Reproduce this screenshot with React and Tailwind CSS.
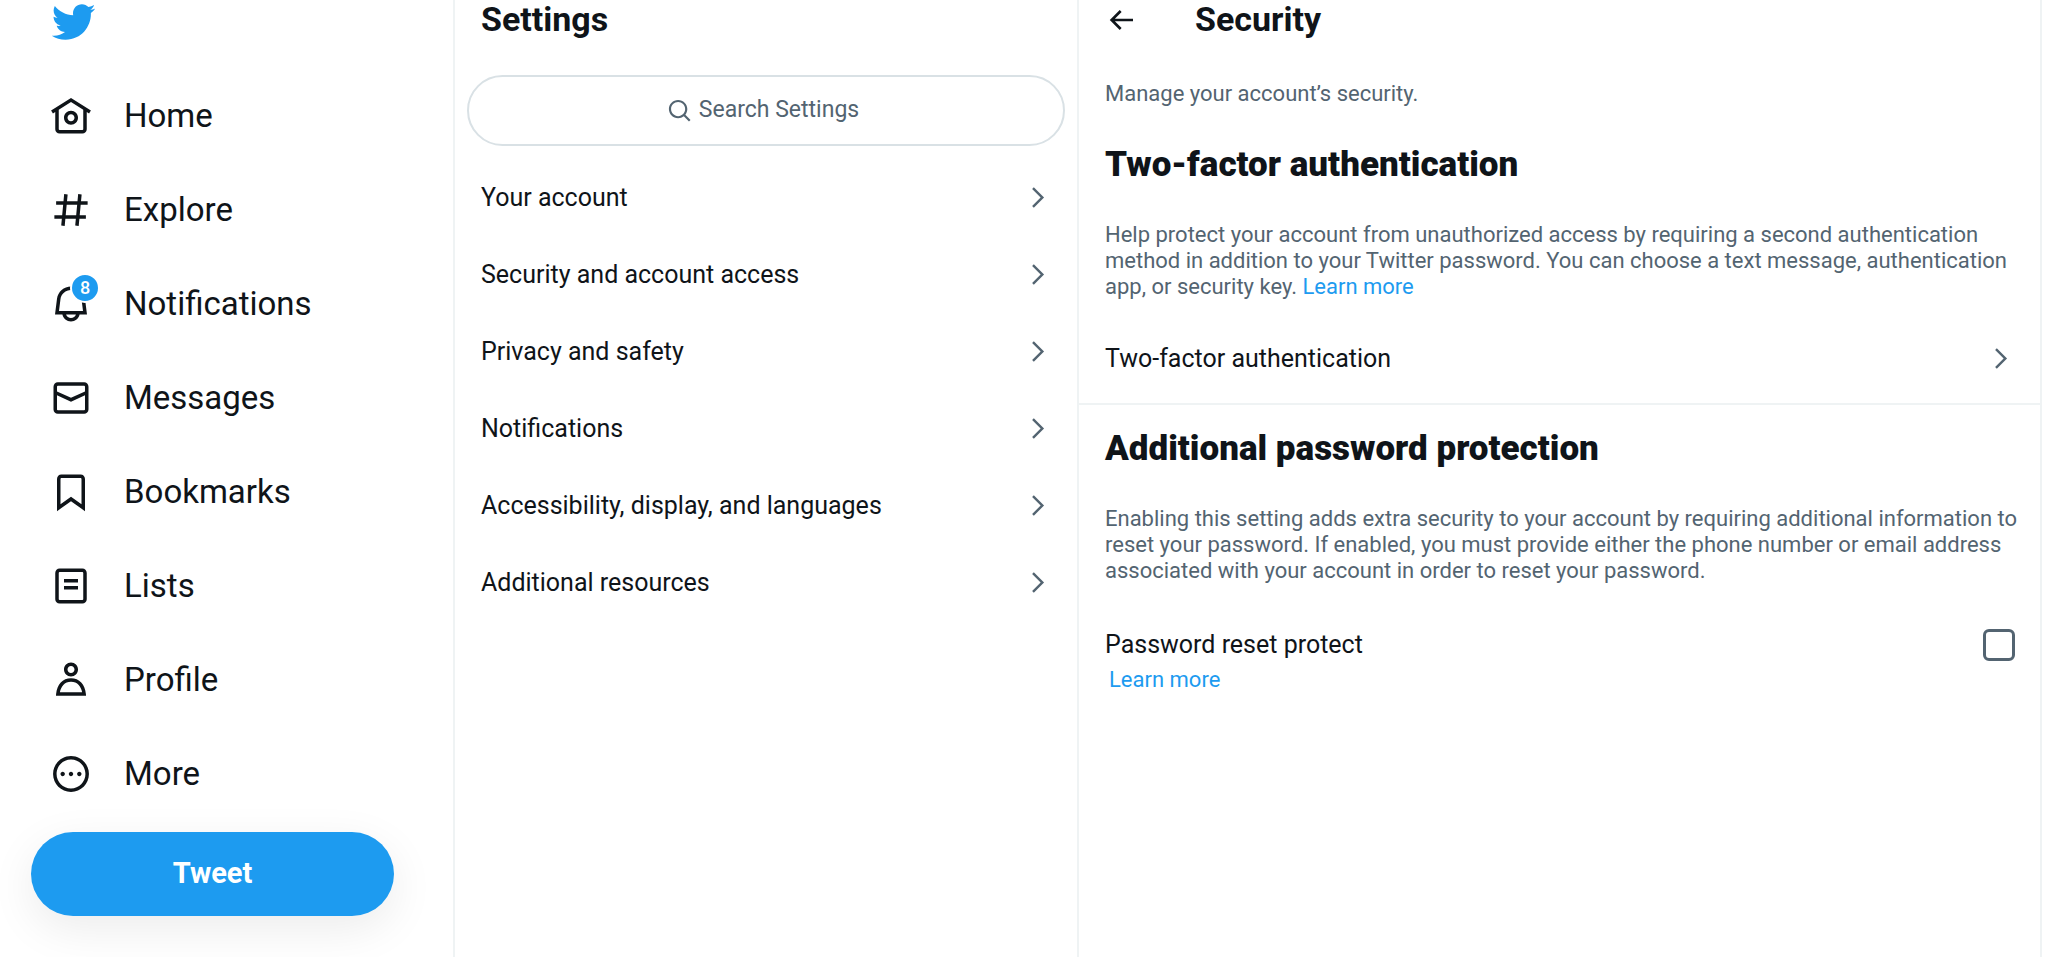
import React, { useState } from 'react';

const navItems = [
  {
    label: 'Home',
    path: 'M12 9c-2.209 0-4 1.791-4 4s1.791 4 4 4 4-1.791 4-4-1.791-4-4-4zm0 6c-1.105 0-2-.895-2-2s.895-2 2-2 2 .895 2 2-.895 2-2 2zm0-13.304L.622 8.807l1.06 1.696L3 9.679V19.5C3 20.881 4.119 22 5.5 22h13c1.381 0 2.5-1.119 2.5-2.5V9.679l1.318.824 1.06-1.696L12 1.696zM19 19.5c0 .276-.224.5-.5.5h-13c-.276 0-.5-.224-.5-.5V8.429l7-4.375 7 4.375V19.5z',
  },
  {
    label: 'Explore',
    path: 'M10.09 3.098L9.72 7h5.99l.39-4.089 1.99.187L17.72 7h3.78v2h-3.97l-.56 6h3.53v2h-3.72l-.38 4.09-1.99-.187.36-3.903H8.78l-.38 4.09-1.99-.187L6.77 17H2.5v-2h4.46l.56-6H3.5V7h4.21l.39-4.089 1.99.187zM14.96 15l.56-6H9.53l-.56 6h5.99z',
  },
  {
    label: 'Notifications',
    badge: 8,
    path: 'M19.993 9.042C19.48 5.017 16.054 2 11.996 2s-7.49 3.021-7.999 7.051L2.866 18H7.1c.463 2.282 2.481 4 4.9 4s4.437-1.718 4.9-4h4.236l-1.143-8.958zM12 20c-1.306 0-2.417-.835-2.829-2h5.658c-.412 1.165-1.523 2-2.829 2zm-6.866-4l.847-6.698C6.364 6.272 8.941 4 11.996 4s5.627 2.268 6.013 5.295L18.864 16H5.134z',
  },
  {
    label: 'Messages',
    path: 'M1.998 5.5c0-1.381 1.119-2.5 2.5-2.5h15c1.381 0 2.5 1.119 2.5 2.5v13c0 1.381-1.119 2.5-2.5 2.5h-15c-1.381 0-2.5-1.119-2.5-2.5v-13zm2.5-.5c-.276 0-.5.224-.5.5v2.764l8 3.638 8-3.636V5.5c0-.276-.224-.5-.5-.5h-15zm15.5 5.463l-8 3.636-8-3.638V18.5c0 .276.224.5.5.5h15c.276 0 .5-.224.5-.5v-8.037z',
  },
  {
    label: 'Bookmarks',
    path: 'M4 4.5C4 3.12 5.119 2 6.5 2h11C18.881 2 20 3.12 20 4.5v18.44l-8-5.71-8 5.71V4.5zM6.5 4c-.276 0-.5.22-.5.5v14.56l6-4.29 6 4.29V4.5c0-.28-.224-.5-.5-.5h-11z',
  },
  {
    label: 'Lists',
    path: 'M3 4.5C3 3.12 4.12 2 5.5 2h13C19.88 2 21 3.12 21 4.5v15c0 1.38-1.12 2.5-2.5 2.5h-13C4.12 22 3 20.88 3 19.5v-15zM5.5 4c-.28 0-.5.22-.5.5v15c0 .28.22.5.5.5h13c.28 0 .5-.22.5-.5v-15c0-.28-.22-.5-.5-.5h-13zM16 10H8V8h8v2zm-8 2h8v2H8v-2z',
  },
  {
    label: 'Profile',
    path: 'M5.651 19h12.698c-.337-1.8-1.023-3.21-1.945-4.19C15.318 13.65 13.838 13 12 13s-3.317.65-4.404 1.81c-.922.98-1.608 2.39-1.945 4.19zm.486-5.56C7.627 11.85 9.648 11 12 11s4.373.85 5.863 2.44c1.477 1.58 2.366 3.8 2.632 6.46l.11 1.1H3.395l.11-1.1c.266-2.66 1.155-4.88 2.632-6.46zM12 4c-1.105 0-2 .9-2 2s.895 2 2 2 2-.9 2-2-.895-2-2-2zM8 6c0-2.21 1.791-4 4-4s4 1.79 4 4-1.791 4-4 4-4-1.79-4-4z',
  },
  {
    label: 'More',
    path: 'M3.75 12c0-4.56 3.69-8.25 8.25-8.25s8.25 3.69 8.25 8.25-3.69 8.25-8.25 8.25S3.75 16.56 3.75 12zM12 1.75C6.34 1.75 1.75 6.34 1.75 12S6.34 22.25 12 22.25 22.25 17.66 22.25 12 17.66 1.75 12 1.75zm-4.75 11.5c.69 0 1.25-.56 1.25-1.25s-.56-1.25-1.25-1.25S6 11.31 6 12s.56 1.25 1.25 1.25zm9.5 0c.69 0 1.25-.56 1.25-1.25s-.56-1.25-1.25-1.25-1.25.56-1.25 1.25.56 1.25 1.25 1.25zM13.25 12c0 .69-.56 1.25-1.25 1.25s-1.25-.56-1.25-1.25.56-1.25 1.25-1.25 1.25.56 1.25 1.25z',
  },
];

const settingsItems = [
  'Your account',
  'Security and account access',
  'Privacy and safety',
  'Notifications',
  'Accessibility, display, and languages',
  'Additional resources',
];

const BIRD =
  'M23.643 4.937c-.835.37-1.732.62-2.675.733.962-.576 1.7-1.49 2.048-2.578-.9.534-1.897.922-2.958 1.13-.85-.904-2.06-1.47-3.4-1.47-2.572 0-4.658 2.086-4.658 4.66 0 .364.042.718.12 1.06-3.873-.195-7.304-2.05-9.602-4.868-.4.69-.63 1.49-.63 2.342 0 1.616.823 3.043 2.072 3.878-.764-.025-1.482-.234-2.11-.583v.06c0 2.257 1.605 4.14 3.737 4.568-.392.106-.803.162-1.227.162-.3 0-.593-.028-.877-.082.593 1.85 2.313 3.198 4.352 3.234-1.595 1.25-3.604 1.995-5.786 1.995-.376 0-.747-.022-1.112-.065 2.062 1.323 4.51 2.093 7.14 2.093 8.57 0 13.255-7.098 13.255-13.254 0-.2-.005-.402-.014-.602.91-.658 1.7-1.477 2.323-2.41z';
const SEARCH =
  'M10.25 3.75c-3.59 0-6.5 2.91-6.5 6.5s2.91 6.5 6.5 6.5c1.795 0 3.419-.726 4.596-1.904 1.178-1.177 1.904-2.801 1.904-4.596 0-3.59-2.91-6.5-6.5-6.5zm-8.5 6.5c0-4.694 3.806-8.5 8.5-8.5s8.5 3.806 8.5 8.5c0 1.986-.682 3.815-1.824 5.262l4.781 4.781-1.414 1.414-4.781-4.781c-1.447 1.142-3.276 1.824-5.262 1.824-4.694 0-8.5-3.806-8.5-8.5z';
const BACK = 'M7.414 13l5.043 5.04-1.414 1.42L3.586 12l7.457-7.46 1.414 1.42L7.414 11H21v2H7.414z';
const CHEVRON = 'M14.586 12L7.543 4.96l1.414-1.42L17.414 12l-8.457 8.46-1.414-1.42L14.586 12z';

const Icon = ({ path, className }) => (
  <svg viewBox="0 0 24 24" fill="currentColor" aria-hidden="true" className={`shrink-0 ${className}`}>
    <path d={path} />
  </svg>
);

const LinkRow = ({ label }) => (
  <a href="#" className="flex h-[77px] items-center justify-between pr-[25px] pl-[26px] text-[25px]">
    <span>{label}</span>
    <Icon path={CHEVRON} className="size-[29px] text-[#536471]" />
  </a>
);

const Sidebar = () => (
  <header className="border-r-2 border-[#eff3f4]">
    <a href="#" aria-label="Twitter" className="flex h-[69px] items-start pl-[50px] text-[#1d9bf0]">
      <Icon path={BIRD} className="-mt-px size-[46px]" />
    </a>
    <nav>
      {navItems.map((item) => (
        <a key={item.label} href="#" className="flex h-[94px] items-center gap-8 pl-[50px] text-[33px]">
          <span className="relative">
            <Icon path={item.path} className="size-[42px]" />
            {item.badge && (
              <span className="absolute -top-2.5 -right-2 flex size-[30px] items-center justify-center rounded-full border-2 border-white bg-[#1d9bf0] text-lg leading-none font-medium text-white">
                {item.badge}
              </span>
            )}
          </span>
          <span>{item.label}</span>
        </a>
      ))}
    </nav>
    <div className="pt-[11px] pr-[59px] pl-[31px]">
      <button
        type="button"
        className="h-[84px] w-full rounded-full bg-[#1d9bf0] text-[29px] font-bold text-white shadow-[0_13px_45px_rgba(0,0,0,0.08)]"
      >
        Tweet
      </button>
    </div>
  </header>
);

const SettingsList = () => (
  <section className="border-r-2 border-[#eff3f4]">
    <h1 className="px-[26px] text-[34px] leading-[38px] font-bold">Settings</h1>
    <label className="mx-3 mt-[37px] mb-[13px] flex h-[71px] items-center justify-center gap-1.5 rounded-full border-2 border-[#d9e1e5] pr-1.5 text-[#536471]">
      <Icon path={SEARCH} className="size-[26px]" />
      <input
        type="text"
        aria-label="Search Settings"
        placeholder="Search Settings"
        className="field-sizing-content text-[23px] outline-none placeholder:text-[#536471]"
      />
    </label>
    <nav>
      {settingsItems.map((label) => (
        <LinkRow key={label} label={label} />
      ))}
    </nav>
  </section>
);

const SecurityPanel = () => {
  const [resetProtect, setResetProtect] = useState(false);

  return (
    <main className="border-r-2 border-[#eff3f4] text-[22px] leading-[26px]">
      <div className="flex items-start gap-[58px] px-[26px]">
        <button type="button" aria-label="Back" className="pt-1">
          <Icon path={BACK} className="size-8" />
        </button>
        <h1 className="text-[34px] leading-[38px] font-bold">Security</h1>
      </div>

      {/* Two-factor authentication */}
      <section className="border-b-2 border-[#eff3f4] pt-[43px] pb-1.5">
        <p className="pr-5 pl-[26px] text-[#536471]">Manage your account’s security.</p>
        <h2 className="mt-[39px] pl-[26px] text-[35px] leading-[38px] font-black">Two-factor authentication</h2>
        <p className="mt-[38px] mb-5 pr-5 pl-[26px] text-[#536471]">
          Help protect your account from unauthorized access by requiring a second authentication method in
          addition to your Twitter password. You can choose a text message, authentication app, or security
          key.{' '}
          <a href="#" className="text-[#1d9bf0]">
            Learn more
          </a>
        </p>
        <LinkRow label="Two-factor authentication" />
      </section>

      {/* Password reset protection */}
      <section className="pt-[25px] pl-[26px]">
        <h2 className="text-[35px] leading-[38px] font-black">Additional password protection</h2>
        <p className="mt-[38px] pr-5 text-[#536471]">
          Enabling this setting adds extra security to your account by requiring additional information to
          reset your password. If enabled, you must provide either the phone number or email address
          associated with your account in order to reset your password.
        </p>
        <div className="mt-[45px] flex items-center justify-between pr-[25px]">
          <label htmlFor="reset-protect" className="text-[25px]">
            Password reset protect
          </label>
          <input
            id="reset-protect"
            type="checkbox"
            checked={resetProtect}
            onChange={(e) => setResetProtect(e.target.checked)}
            className="size-8 appearance-none rounded-md border-3 border-[#536471] checked:bg-[#1d9bf0]"
          />
        </div>
        <a href="#" className="mt-1.5 inline-block px-1 text-[#1d9bf0]">
          Learn more
        </a>
      </section>
    </main>
  );
};

const App = () => {
  return (
    <div className="grid min-h-screen grid-cols-[455fr_624fr_963fr] bg-white pr-1.5 font-[Roboto,sans-serif] text-[#0f1419]">
      <Sidebar />
      <SettingsList />
      <SecurityPanel />
    </div>
  );
};

export default App;
